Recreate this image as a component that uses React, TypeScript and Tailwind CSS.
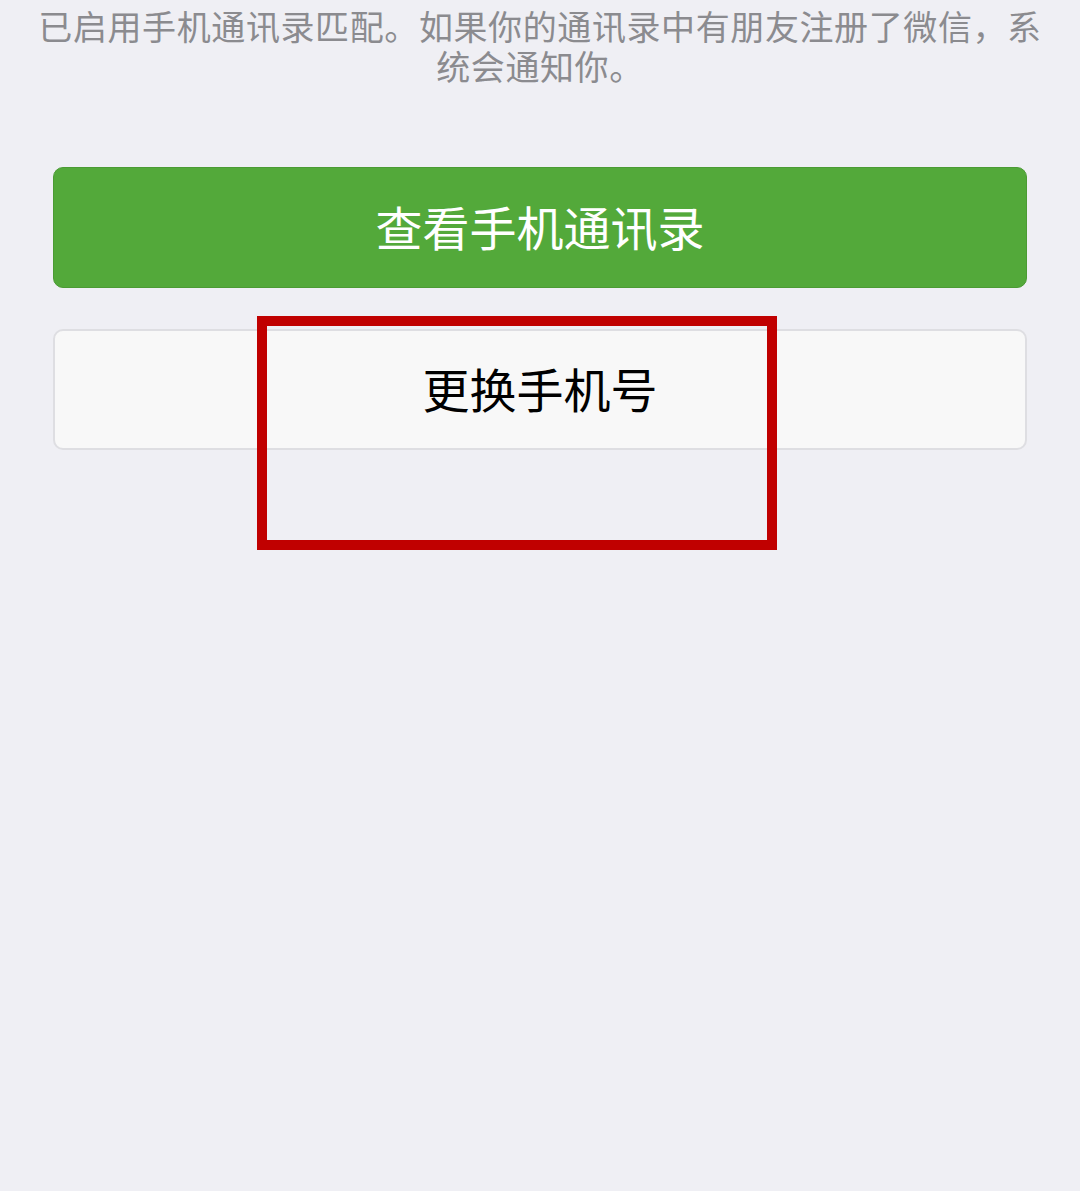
import React from "react";

export default function App() {
  return (
    <div
      className="relative w-[1080px] h-[1191px] bg-[#efeff4] overflow-hidden"
      style={{ fontFamily: '"Noto Sans CJK SC", "Noto Sans", sans-serif' }}
    >
      <p className="pt-[6px] text-center text-[34px] leading-[40px] tracking-[0.6px] text-[#8b8b8f] whitespace-nowrap">
        已启用手机通讯录匹配。如果你的通讯录中有朋友注册了微信，系
        <br />
        统会通知你。
      </p>
      <div className="mt-[81px] px-[53px] flex flex-col gap-[41px]">
        <button className="h-[121px] w-full rounded-[10px] bg-[#53a93a] border border-[#4b9b34] text-white text-[47px] leading-none flex items-center justify-center pb-[5px]">
          查看手机通讯录
        </button>
        <button className="h-[121px] w-full rounded-[10px] bg-[#f8f8f8] border-2 border-[#dedee2] text-black text-[47px] leading-none flex items-center justify-center pb-[5px]">
          更换手机号
        </button>
      </div>
      <div className="absolute left-[257px] top-[316px] w-[520px] h-[234px] border-[10px] border-[#c00000]" />
    </div>
  );
}
